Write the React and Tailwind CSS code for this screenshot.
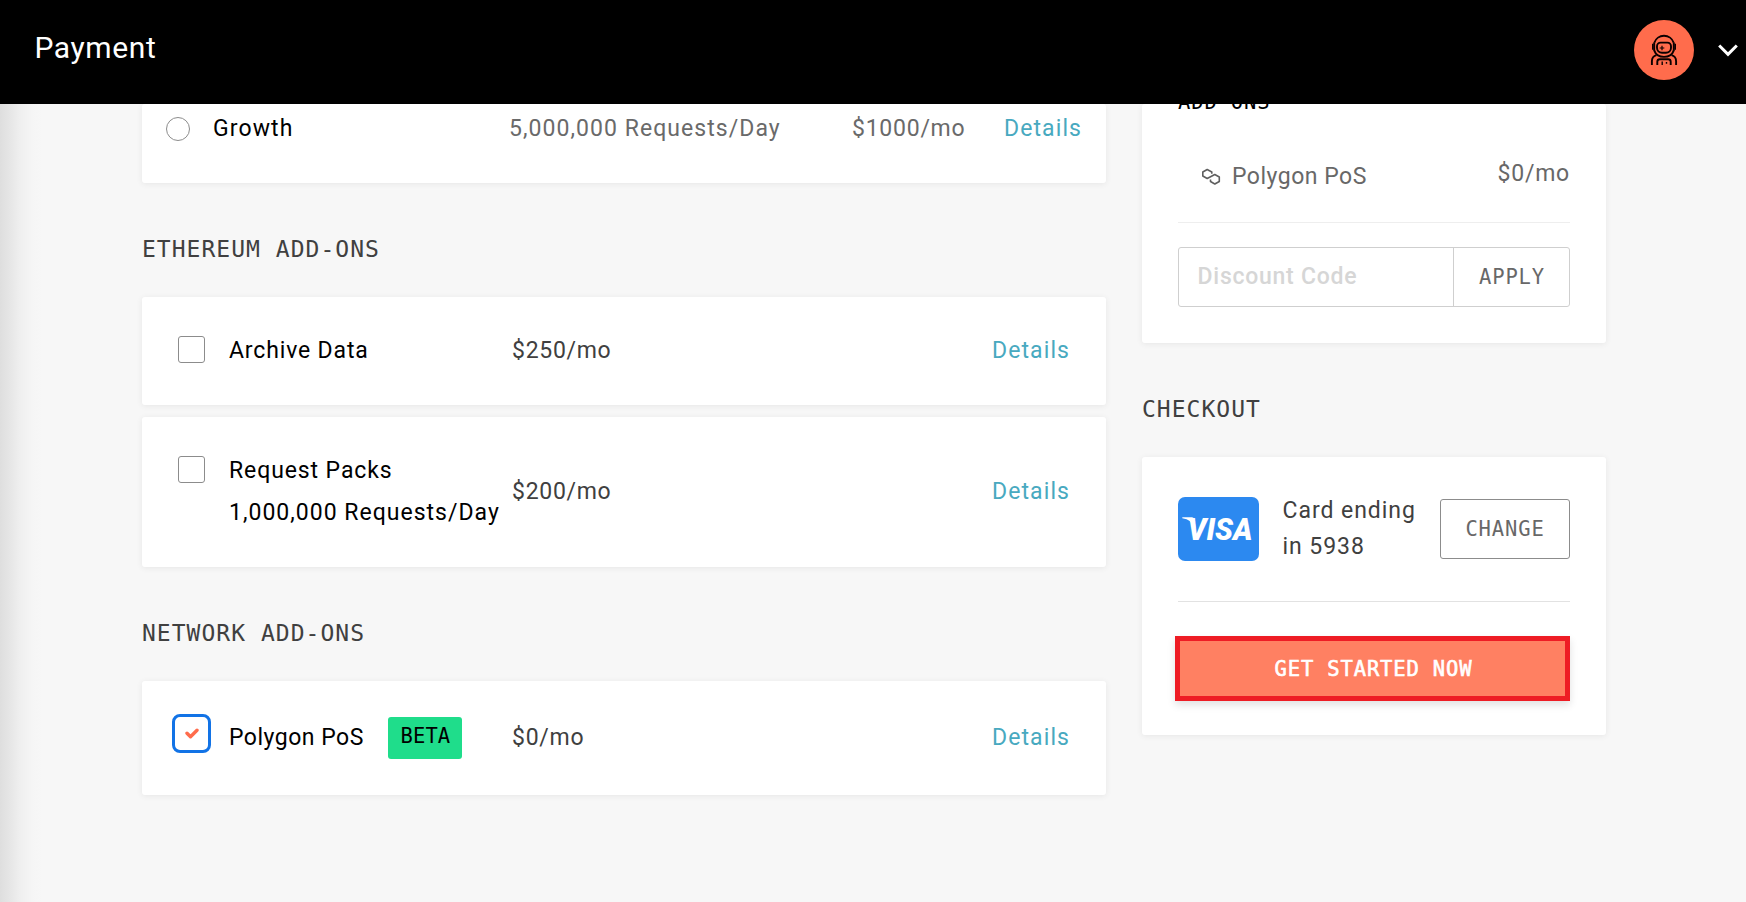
const cardClass = "rounded-[3px] bg-white shadow-[0_1px_6px_rgba(0,0,0,0.07)]";
const monoSmall = "font-['DejaVu_Sans_Mono',monospace] text-[20.5px] tracking-[0.85px] ";

function Heading({ children }) {
  return (
    <h2 className="h-[114px] pt-[48px] font-['DejaVu_Sans_Mono',monospace] text-[23px] leading-[36px] tracking-[1.02px] text-[#404040]">
      {children}
    </h2>
  );
}

function Details() {
  return <a className="tracking-[1.1px] text-[#48a9c0]">Details</a>;
}

function Avatar() {
  return (
    <div className="flex h-[60px] w-[60px] items-center justify-center rounded-full bg-[#ff6c4c]">
      <svg width="28" height="32" viewBox="0 0 28 32" fill="none" stroke="#0b0000" strokeWidth="1.9">
        <path d="M4.300 8.800a10.200 10.200 0 0 1 19.400 0M4.300 16.600c1.300 3.700 5 6.300 9.700 6.300s8.400-2.600 9.700-6.300" />
        <path d="M4.200 8.500v8.500M23.800 8.500v8.500" strokeWidth="1.900" />
        <path d="M2.800 9.700v6M25.200 9.700v6" strokeWidth="1.600" />
        <path d="M10.600 8.600h6.800a3.600 3.600 0 0 1 3.600 3.600v1.600a5 5 0 0 1-5 5h-4a5 5 0 0 1-5-5v-1.600a3.600 3.600 0 0 1 3.600-3.600z" />
        <path d="M12 11.700v4.600M9.700 14h4.600" strokeWidth="1.200" />
        <path d="M6.500 21.200C3.300 22 1.900 24.500 1.900 27.200v3.800M21.500 21.200c3.200.8 4.600 3.300 4.600 6v3.800" />
        <path d="M7.300 31v-3.200a2.500 2.500 0 0 1 2.500-2.500h8.400a2.500 2.500 0 0 1 2.500 2.500V31" />
        <path d="M12.200 27.500V31M16.500 28v1.800" strokeWidth="1.400" />
      </svg>
    </div>
  );
}

function Checkbox() {
  return <span className="mt-[3px] h-[27px] w-[27px] rounded-[3px] border border-[#8c8c8c] bg-white" />;
}

export default function App() {
  return (
    <div className="h-[902px] w-[1746px] overflow-hidden bg-[#f7f7f7] font-[Roboto,sans-serif] text-[23px] leading-[36px] text-black">
      <header className="relative z-10 flex h-[104px] items-center justify-between bg-black pr-[8px] pl-[34.5px] text-white">
        <h1 className="mb-[9px] text-[30px] tracking-[0.6px]">Payment</h1>
        <div className="mb-1 flex items-center gap-[24px]">
          <Avatar />
          <svg width="20" height="13" viewBox="0 0 20 13" fill="none" stroke="#fff" strokeWidth="3">
            <path d="M1.200 1.500 10 10.300l8.800-8.800" />
          </svg>
        </div>
      </header>

      <div className="flex h-[798px] bg-[linear-gradient(to_right,#dedede_0,#e6e6e6_10px,#efefef_20px,#f5f5f5_32px,#f7f7f7_42px)] pl-[142px]">
        <main className="w-[964px]">
          <section className={"flex h-[79px] pt-[7px] pl-[24px] " + cardClass}>
            <span className="mt-[6px] h-6 w-6 rounded-full border border-[#8c8c8c]" />
            <span className="ml-[23px] w-[296px] tracking-[1.1px]">Growth</span>
            <span className="w-[343px] tracking-[1.05px] text-[#6a6a6a]">5,000,000 Requests/Day</span>
            <span className="w-[152px] tracking-[0.75px] text-[#6a6a6a]">$1000/mo</span>
            <Details />
          </section>

          <Heading>ETHEREUM ADD-ONS</Heading>

          <section className={"flex h-[108px] pt-[36px] pl-9 " + cardClass}>
            <span className="flex"><Checkbox /></span>
            <span className="ml-[24px] w-[283px] tracking-[0.85px]">Archive Data</span>
            <span className="w-[480px] tracking-[0.7px] text-[#404040]">$250/mo</span>
            <Details />
          </section>

          <section className={"mt-3 flex h-[150px] pt-[36px] pl-9 " + cardClass}>
            <span className="flex"><Checkbox /></span>
            <span className="ml-[24px] w-[283px] whitespace-nowrap">
              <span className="block h-[42px] tracking-[0.9px]">Request Packs</span>
              <span className="block tracking-[1.01px]">1,000,000 Requests/Day</span>
            </span>
            <span className="w-[480px] pt-[21px] tracking-[0.7px] text-[#404040]">$200/mo</span>
            <span className="pt-[21px]"><Details /></span>
          </section>

          <Heading>NETWORK ADD-ONS</Heading>

          <section className={"flex h-[114px] pl-[30px] " + cardClass}>
            <span className="mt-[33px] flex h-[39px] w-[39px] items-center justify-center rounded-[8px] border-[3px] border-[#1273e6]">
              <svg width="14" height="11" viewBox="0 0 14 11" fill="none" stroke="#ff6c4c" strokeWidth="3.400" strokeLinecap="round" strokeLinejoin="round">
                <path d="M2 5.200 5.500 8.700 12 2.200" />
              </svg>
            </span>
            <span className="mt-[39px] ml-[18px] w-[159px] tracking-[0.5px]">Polygon PoS</span>
            <span className="mt-[36px] mr-[50px] h-[42px] w-[74px] rounded-[3px] bg-[#1fdd8b] pl-[12.5px] font-['DejaVu_Sans_Mono',monospace] text-[20.5px] leading-[38px] tracking-[0.1px]">BETA</span>
            <span className="mt-[39px] w-[480px] tracking-[0.75px] text-[#404040]">$0/mo</span>
            <span className="mt-[39px]"><Details /></span>
          </section>
        </main>

        <aside className="ml-9 w-[464px]">
          <section className={"flex h-[239px] flex-col px-9 " + cardClass}>
            <div className={monoSmall + "-mt-[20px] h-[37px]"}>ADD-ONS</div>
            <div className="flex h-[102px] border-b border-[#eeeeee] pt-[33px] text-[#686868]">
              <svg className="mt-[14px] ml-[23px]" width="20" height="18" viewBox="0 0 20 18" fill="none" stroke="#5f5f5f" strokeWidth="1.600" strokeLinejoin="round">
                <path d="M10.800 5.800V4L6.200 1.500 1.800 4v4l4.400 2.500L13.800 6.500l4.500 2.500v4.500l-4.500 2.500-4.300-2.500v-2" />
              </svg>
              <span className="mt-[5px] ml-[11px] tracking-[0.5px]">Polygon PoS</span>
              <span className="mt-[2px] ml-auto tracking-[0.75px]">$0/mo</span>
            </div>
            <div className="mt-[24px] flex h-[60px] rounded-[3px] border border-[#cfcfcf] leading-[58px]">
              <span className="w-[275px] border-r border-[#cfcfcf] pl-[18.5px] font-medium tracking-[0.75px] text-[#d6d6d6]">Discount Code</span>
              <span className={monoSmall + "flex-1 pl-[1px] text-center text-[#686868]"}>APPLY</span>
            </div>
          </section>

          <Heading>CHECKOUT</Heading>

          <section className={"h-[278px] px-9 " + cardClass}>
            <div className="flex h-[145px] border-b border-[#e2e2e2]">
              <div className="mt-[40px] h-[64px] w-[81px] rounded-[7px] bg-[#2c89f0]">
                <svg width="81" height="64" viewBox="0 0 81 64" fill="#fff">
                  <path d="M4.300 20.300h9.500q2.200 0 2.800 3l1 8Q13.500 22.400 4.300 21.300z" />
                  <text x="9.500" y="42.500" textLength="65" lengthAdjust="spacingAndGlyphs" fontFamily="Roboto, sans-serif" fontSize="31" fontWeight="900" fontStyle="italic">VISA</text>
                </svg>
              </div>
              <div className="mt-[36px] ml-[23.5px] tracking-[0.95px] whitespace-nowrap text-[#404040]">
                <div>Card ending</div>
                <div>in 5938</div>
              </div>
              <div className={monoSmall + "mt-[42px] ml-auto h-[60px] w-[130px] rounded-[3px] border border-[#8c8c8c] text-center leading-[58px] text-[#686868]"}>CHANGE</div>
            </div>
            <div className={monoSmall + "mt-[34px] -ml-[3px] h-[65px] w-[395px] border-[5px] border-[#ee1c24] bg-[#ff8062] pl-[2px] text-center leading-[56px] text-white shadow-[0_4px_8px_rgba(0,0,0,0.12)] [-webkit-text-stroke:0.6px_#fff]"}>GET STARTED NOW</div>
          </section>
        </aside>
      </div>
    </div>
  );
}
